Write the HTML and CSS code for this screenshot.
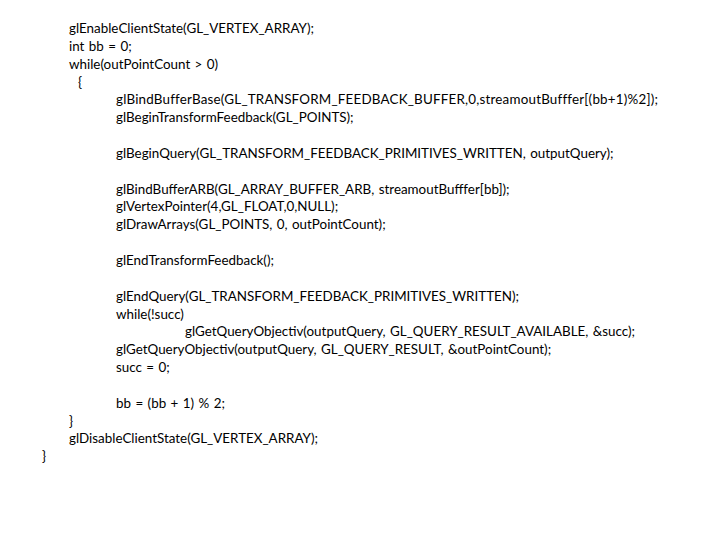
FILE: index.html
```html
<!DOCTYPE html>
<html>
<head>
<meta charset="utf-8">
<link rel="stylesheet" href="styles.css">
</head>
<body>
<div class="code">
<div class="ln i1">glEnableClientState(GL_VERTEX_ARRAY);</div>
<div class="ln i1">int bb = 0;</div>
<div class="ln i1">while(outPointCount &gt; 0)</div>
<div class="ln i1b">{</div>
<div class="ln i2 wide">glBindBufferBase(GL_TRANSFORM_FEEDBACK_BUFFER,0,streamoutBufffer[(bb+1)%2]);</div>
<div class="ln i2">glBeginTransformFeedback(GL_POINTS);</div>
<div class="ln blank"></div>
<div class="ln i2">glBeginQuery(GL_TRANSFORM_FEEDBACK_PRIMITIVES_WRITTEN, outputQuery);</div>
<div class="ln blank"></div>
<div class="ln i2">glBindBufferARB(GL_ARRAY_BUFFER_ARB, streamoutBufffer[bb]);</div>
<div class="ln i2">glVertexPointer(4,GL_FLOAT,0,NULL);</div>
<div class="ln i2">glDrawArrays(GL_POINTS, 0, outPointCount);</div>
<div class="ln blank"></div>
<div class="ln i2">glEndTransformFeedback();</div>
<div class="ln blank"></div>
<div class="ln i2">glEndQuery(GL_TRANSFORM_FEEDBACK_PRIMITIVES_WRITTEN);</div>
<div class="ln i2">while(!succ)</div>
<div class="ln i3">glGetQueryObjectiv(outputQuery, GL_QUERY_RESULT_AVAILABLE, &amp;succ);</div>
<div class="ln i2">glGetQueryObjectiv(outputQuery, GL_QUERY_RESULT, &amp;outPointCount);</div>
<div class="ln i2">succ = 0;</div>
<div class="ln blank"></div>
<div class="ln i2">bb = (bb + 1) % 2;</div>
<div class="ln i1">}</div>
<div class="ln i1">glDisableClientState(GL_VERTEX_ARRAY);</div>
<div class="ln i0">}</div>
</div>
</body>
</html>
```
FILE: styles.css
```css
html, body {
  margin: 0;
  padding: 0;
  background: #ffffff;
}
.code {
  padding-top: 20px;
  font-family: "Lato", "Open Sans", sans-serif;
  font-size: 13.4px;
  line-height: 17.85px;
  color: #000000;
  word-spacing: 1px;
}
.ln {
  white-space: pre;
  height: 17.85px;
}
.wide {
  letter-spacing: 0.2px;
}
.i0 { padding-left: 42px; }
.i1 { padding-left: 69px; }
.i1b { padding-left: 78px; }
.i2 { padding-left: 116px; }
.i3 { padding-left: 185px; }
```
